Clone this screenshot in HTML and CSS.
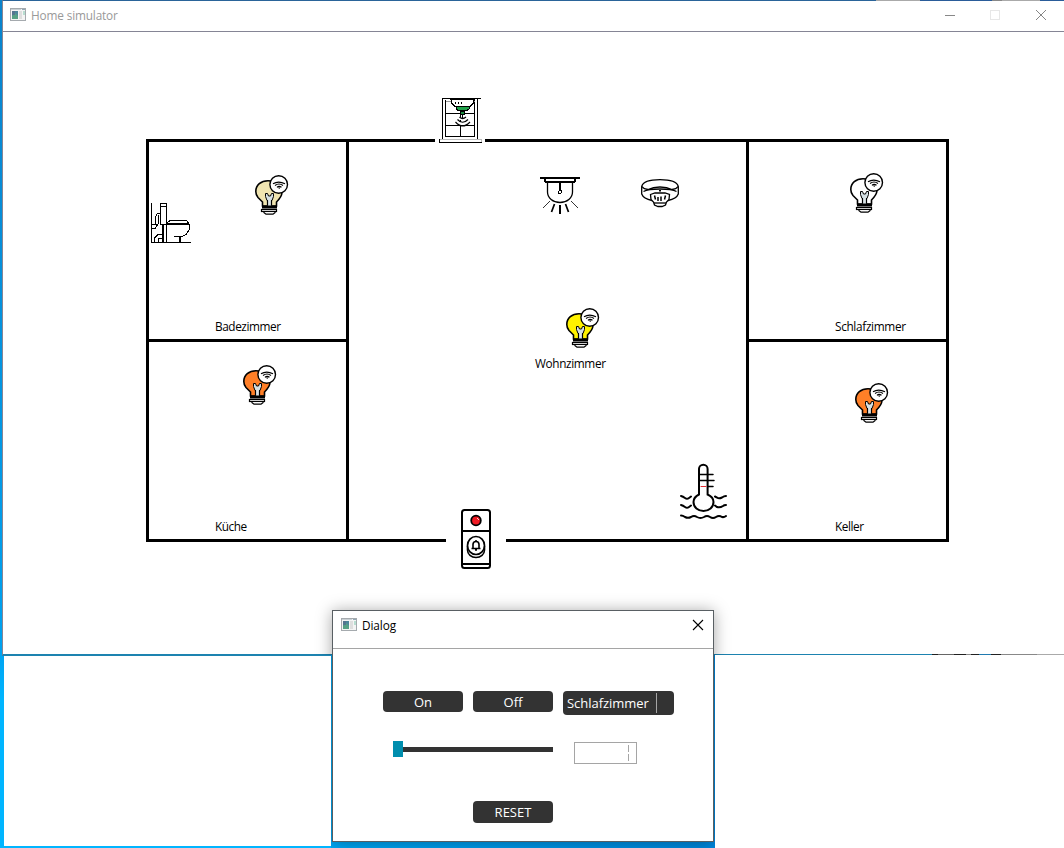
FILE: index.html
```html
<!DOCTYPE html>
<html lang="de">
<head>
<meta charset="utf-8">
<title>Home simulator</title>
<link rel="stylesheet" href="styles.css">
</head>
<body>
<svg class="defs" width="0" height="0">
  <symbol id="app-icon" viewBox="0 0 16 14">
    <rect x=".5" y=".5" width="15" height="12" fill="#f4f4f4" stroke="#a5aaae"/>
    <path d="M1 1.5h10" stroke="#c9d0d4"/><path d="M12 1.5h3" stroke="#91a7b5"/>
    <rect x="2" y="3" width="6" height="8" fill="#4b869a"/>
    <path d="M2 11V8l3-3 3 3v3z" fill="#56a184"/><path d="M2 3h3v4H2z" fill="#54758f"/>
    <rect x="9" y="3" width="3" height="8" fill="#dedede"/><rect x="13" y="3" width="2" height="4" fill="#b8ddd0"/>
  </symbol>
  <symbol id="bulb" viewBox="0 0 34 41">
    <g shape-rendering="auto">
    <path d="M7.500 31V27L3 22.500Q.8 20 .8 16.500C.8 10 6 5.800 13 5.800C22 5.800 27.500 11 27 17.500C26.800 21 25 23.500 21.500 27V31z" fill="currentColor" stroke="#000" stroke-width="1.600"/>
    <path d="M10.500 18.500h2l1 2.500h2l1-2.500h2v3l-1.500 4h-5l-1.500-4z" fill="#d5e0e4" stroke="#000"/>
    <path d="M14.500 25v6" stroke="#dce6e9" stroke-width="3"/><path d="M12.500 25.500v5M16.500 25.500v5" stroke="#000" stroke-width="1.200"/>
    <rect x="7" y="30.500" width="15" height="3"/>
    <rect x="6.500" y="34.500" width="15" height="2" fill="#fff" stroke="#000" stroke-width="1.200"/>
    <path d="M8.500 37.200l2.500 2h7l2.500-2" fill="#fff" stroke="#000" stroke-width="1.300"/>
    <circle cx="23.700" cy="9.500" r="8.800" fill="#fff" stroke="#000" stroke-width="1.400"/>
    <path d="M18 8.700Q23.500 5.500 30 8.700M20 10.500Q24 7.500 28 10.500M22 12.300Q24 10.300 26.500 12.300" fill="none" stroke="#000" stroke-width="1.200"/>
    <path d="M23 12.500h2.500L24.200 14z"/>
    </g>
  </symbol>
</svg>

<main class="desktop">
  <div class="edge edge-top"></div>
  <section class="window">
    <header class="titlebar">
      <svg class="app-icon" aria-hidden="true"><use href="#app-icon"/></svg>
      <span class="window-title">Home simulator</span>
      <svg class="controls" viewBox="0 0 104 12"><path d="M1 6.500h10" stroke="#888"/><rect x="46.500" y="1.500" width="9" height="9" fill="none" stroke="#e7e7e7"/><path d="M92 1l10 10M102 1l-10 10" stroke="#858585"/></svg>
    </header>
  </section>

  <svg class="plan" viewBox="0 0 1064 654" shape-rendering="crispEdges">
    <g class="walls">
      <path d="M435 140.500H147.500V540.500H446M485 140.500H947.500V540.500H506"/>
      <path d="M347.500 140V540M747.500 140V540M147 340.500H348M747 340.500H948"/>
    </g>
    <use class="cream" href="#bulb" x="255" y="175" width="34" height="41"/>
    <use class="yellow" href="#bulb" x="566" y="308" width="34" height="41"/>
    <use class="off" href="#bulb" x="850" y="173" width="34" height="41"/>
    <use class="orange" href="#bulb" x="243" y="365" width="34" height="41"/>
    <use class="orange" href="#bulb" x="855" y="383" width="34" height="41"/>

    <!-- window sensor -->
    <g class="ink" transform="translate(439 98)">
      <rect x="3" y="0" width="36" height="41" fill="#fff" stroke="none"/>
      <path d="M3.500 41V0M3 .500H42M38.500 0V41"/>
      <path d="M6.500 2v36.500h29V2"/>
      <path d="M7 3.500H12M32 3.500h4" stroke="#999"/>
      <path d="M7 15.500h29M7 27.500h29M21.500 17v21"/>
      <path d="M12.500 0v5l3 3H31.500l3-3V0z" fill="#fff"/>
      <path d="M11 1.500h25"/>
      <path d="M16.500 4v2M19.500 4v2M22.500 4v2"/>
      <path d="M17 8.500h13v2.500l-2 1.500h-9l-2-1.500z" fill="#21a24b"/>
      <path d="M21.500 13.500h4v3h-4z" fill="#158c3c"/>
      <path d="M17 20h12M18 25h11" stroke="#fff" stroke-width="3"/>
      <g shape-rendering="auto" stroke-width="1.200"><path d="M20.500 19Q23.500 22 27 19M18.500 21.500Q23.500 27 29 21.500M16.500 24Q23.500 32 31 24" /></g>
      <path d="M23.500 17v3"/>
      <rect x=".5" y="41.500" width="42" height="3" fill="#fff"/>
      <path d="M1 41.500H42M42.500 41v3" stroke="#bbb"/>
    </g>

    <!-- toilet -->
    <g class="ink" transform="translate(151 203)">
      <path d="M.5 0V39.500M0 39.500H40M0 21.500H6M9.500 .500h6v21h-6zM9 3.500h6"/>
      <path d="M4.500 22V13.500l2-3H9M7.500 21V12"/>
      <path d="M16 22v-2l3-2.500H35.500L37.500 20v1.500H16M38.500 21V26.500L35 31.500 31 33.500H23"/>
      <path d="M16 20.500h21"/>
      <path d="M29 33v6M12 22v17" stroke-width="2"/>
      <path d="M15.500 22v17M0 25.500h4l2-3v-2M3.500 39v-4l4-4h4M7.500 39v-3l2-1h2"/>
    </g>

    <!-- motion sensor -->
    <g class="ink" transform="translate(540 177)">
      <path d="M0 1H40" stroke-width="2"/><path d="M5 2v3M35 2v3M5 5H35" stroke-width="1.500"/>
      <path d="M7.500 6V15C7.500 21 13 25.500 20 25.500S32.500 21 32.500 15V6" shape-rendering="auto" stroke-width="1.300"/>
      <path d="M20 6v8" stroke-width="2"/><circle cx="20" cy="15" r="1.500"/>
      <path d="M20 28v9" stroke-width="2"/><path d="M14.500 27l-3 8M25.500 27l3 8" shape-rendering="auto" stroke-width="1.700"/><path d="M9.500 24L3 30.500M30.500 24l6.500 6.500" stroke-width=".8"/>
    </g>

    <!-- smoke detector -->
    <g class="ink smoke" transform="translate(641 179)" shape-rendering="auto">
      <path d="M.7 7.500C2 3 9 .7 19 .7S36 3 37.300 7.500V15C36 18.500 32 20.500 27 21.500H11C6 20.500 2 18.500 .7 15z"/>
      <path d="M1 7.500Q3 10.500 7 10.500Q12 8 19 8T31 10.500Q35 10.500 37 7.500M2.500 12.500Q7 10 19 10T35.500 12.500"/>
      <path d="M18 11.800h2" stroke-width="1.500"/>
      <path d="M9.500 15.500L14 14H24L28.500 15.500 28 20.500 25.500 23 24.500 26 21 27.500H17L13.500 26 12.500 23 10 20.500z" fill="#fff"/>
      <path d="M13.500 16.500l1 4M17 18v4M20 17.500v4.500M24.500 16.500l-1 4" stroke-width="1.500"/><path d="M13 24H25"/>
    </g>

    <!-- water temperature -->
    <g class="temp" transform="translate(670 456)" shape-rendering="auto">
      <path d="M29 38.500V13a4.300 4.300 0 0 1 8.600 0V38.500C42 40.500 43.500 43.500 43.500 46c0 5.500-4.500 9-10 9s-10-3.500-10-9c0-3 1.500-5.500 5.500-7.500z"/>
      <path d="M30 18.500h13M30 24.500h14M38 30.500h5" stroke-width="1.500"/><path class="red" d="M31 30.500h5"/>
      <path d="M11 40q2 .5 4 2t4 0l2-1.500M45 40.500l2 1q2 1.500 5 0 2-1.500 4-1.500M11 49q2 .5 4 2t4 0l2-1.500M45 49.500l2 1.500q3 1 6-1 1-1 3-1M11 59.500q2 0 4 1.500 3 1.500 6 0 3-2 6 0 3.500 2 7 0 3-2 6 0 3 2 6 0 3-2 6 0 2 .5 4-1"/>
    </g>

    <!-- doorbell -->
    <g class="bell" transform="translate(461 509)" shape-rendering="auto">
      <rect x="1" y="1" width="28" height="58" rx="2.500"/><path d="M1 22h28M1 55h28"/>
      <path d="M6.500 37v4a8.500 7.500 0 0 0 17 0v-4" stroke-width="1.600"/>
      <ellipse cx="15" cy="36.500" rx="8.500" ry="9" stroke-width="1.700"/>
      <circle cx="15" cy="11.500" r="4.800" fill="#f01b24" stroke-width="1.800"/><path d="M16 9l2 2" stroke="#fff" stroke-width=".8"/>
      <path d="M10.500 39.500h9M12 39V35.500q0-3 3-3t3 3V39M15 31v2M14 41h2" stroke-width="1.600"/>
    </g>

    <g class="labels">
      <text x="215" y="331" textLength="66">Badezimmer</text>
      <text x="535" y="368" textLength="71">Wohnzimmer</text>
      <text x="835" y="331" textLength="71">Schlafzimmer</text>
      <text x="215" y="531" textLength="32">Küche</text>
      <text x="835" y="531" textLength="29">Keller</text>
    </g>
  </svg>

  <div class="pane pane-left"></div>
  <div class="pane pane-right"></div>
  <div class="desktop-gap"></div>
  <div class="edge edge-bottom"></div>

  <div class="shadow-area">
  <section class="dialog">
    <header class="dialog-bar">
      <svg class="app-icon" aria-hidden="true"><use href="#app-icon"/></svg>
      <span class="dialog-title">Dialog</span>
      <svg class="dialog-close" viewBox="0 0 12 12"><path d="M1 1l10 10M11 1L1 11" stroke="#000" stroke-width="1.100"/></svg>
    </header>
    <div class="dialog-body">
      <div class="row buttons">
        <button class="btn">On</button><button class="btn">Off</button>
        <div class="combo"><span class="combo-text">Schlafzimmer</span><span class="combo-arrow"></span></div>
      </div>
      <div class="row settings">
        <div class="slider"><span class="thumb"></span><span class="track"></span></div>
        <div class="spin"><i class="tick"></i><i class="tick"></i></div>
      </div>
      <button class="btn reset">RESET</button>
    </div>
  </section>
  </div>
</main>
</body>
</html>
```
FILE: styles.css
```css
* { box-sizing: border-box; }
body { margin: 0; font-family: "Open Sans", "Noto Sans", sans-serif; font-size: 12px; }
.defs { position: absolute; }
.desktop { position: relative; width: 1064px; height: 848px; overflow: hidden; background: linear-gradient(#0a83cc, #00a2f0 650px, #00b5ff 700px); }
.window { position: absolute; left: 2px; top: 0; width: 1062px; height: 656px; background: #fff; border-top: 1px solid #2a6499; border-bottom: 2px solid #1d83b0; border-left: 1px solid #858595; }
.titlebar { height: 31px; display: flex; align-items: center; padding: 0 16px 2px 7px; border-bottom: 1px solid #858595; }
.app-icon { width: 16px; height: 14px; }
.window-title { margin-left: 5px; color: #999; font-size: 11.8px; letter-spacing: -.15px; }
.controls { width: 104px; height: 12px; margin-left: auto; }
.edge { position: absolute; height: 1px; z-index: 1; }
.edge-top { left: 876px; top: 0; width: 188px; background: linear-gradient(90deg, #aaa 44px, #2a5c99 44px 116px, #888 116px 126px, #aaa 126px 164px, #2a5c99 164px); }
.edge-bottom { left: 932px; top: 654px; width: 132px; background: linear-gradient(90deg, #222 6px, #666 6px 22px, #222 22px 34px, #888 34px 39px, #222 39px 47px, #207ab0 47px 59px, #222 59px 69px, #888 69px 105px, #aaa 105px); }
.plan { position: absolute; left: 0; top: 0; width: 1064px; height: 654px; }
.walls { fill: none; stroke: #000; stroke-width: 3; }
.ink { fill: none; stroke: #000; stroke-width: 1; }
.smoke { stroke-width: 1.3; }
.temp { fill: none; stroke: #000; stroke-width: 2; stroke-linecap: round; }
.red { stroke: #e32b32; stroke-width: 1; }
.bell { fill: #fff; stroke: #000; stroke-width: 2; }
.labels { fill: #000; font-size: 11.8px; }
.cream { color: #efe4b0; }
.yellow { color: #fff200; }
.orange { color: #ff7f27; }
.off { color: #fff; }
.pane { position: absolute; background: #fff; }
.pane-left { left: 4px; top: 656px; width: 327px; height: 190px; }
.pane-right { left: 715px; top: 655px; width: 349px; height: 193px; }
.desktop-gap { position: absolute; left: 331px; top: 655px; width: 384px; height: 193px; background: linear-gradient(90deg, #00a8f5, #0088de); }
.shadow-area { position: absolute; inset: 0; clip-path: polygon(0 0, 100% 0, 100% 655px, 715px 655px, 715px 100%, 331px 100%, 331px 655px, 0 655px); }
.dialog { position: absolute; left: 332px; top: 610px; width: 382px; height: 232px; background: #fff; border: 1px solid #595f63; box-shadow: 0 1px 15px rgba(0, 0, 0, .35); }
.dialog-bar { height: 38px; display: flex; align-items: center; padding: 0 9px 9px 8px; border-bottom: 1px solid #a5a5a5; }
.dialog-title { margin-left: 5px; font-size: 11.8px; letter-spacing: -.1px; }
.dialog-close { width: 12px; height: 12px; margin-left: auto; }
.dialog-body { padding: 42px 39px 0 50px; }
.row { display: flex; align-items: flex-start; }
.buttons { gap: 10px; height: 50px; }
.btn { width: 80px; height: 21px; padding: 1px 0 0; border: 0; border-radius: 4px; background: #333; color: #fff; font: 13px/20px "Open Sans", sans-serif; }
.combo { width: 111px; height: 24px; display: flex; align-items: center; padding: 0 17px 0 4px; border-radius: 4px; background: #333; color: #fff; font-size: 13px; }
.combo-text { letter-spacing: -.03px; }
.combo-arrow { width: 1px; height: 20px; margin-left: auto; background: #a5a5a5; }
.settings { gap: 21px; padding-left: 10px; height: 60px; }
.slider { width: 160px; height: 16px; display: flex; align-items: center; }
.thumb { width: 10px; height: 16px; background: #008eae; }
.track { flex: 1; height: 5px; margin-top: 1px; background: #333; }
.spin { width: 63px; height: 22px; margin-top: 1px; display: flex; flex-direction: column; align-items: flex-end; gap: 2px; padding: 2px 7px; border: 1px solid #a5a5a5; }
.tick { width: 1px; height: 7px; background: #a5a5a5; }
.reset { display: block; margin-left: 90px; height: 22px; padding: 0 0 1px; }
```
